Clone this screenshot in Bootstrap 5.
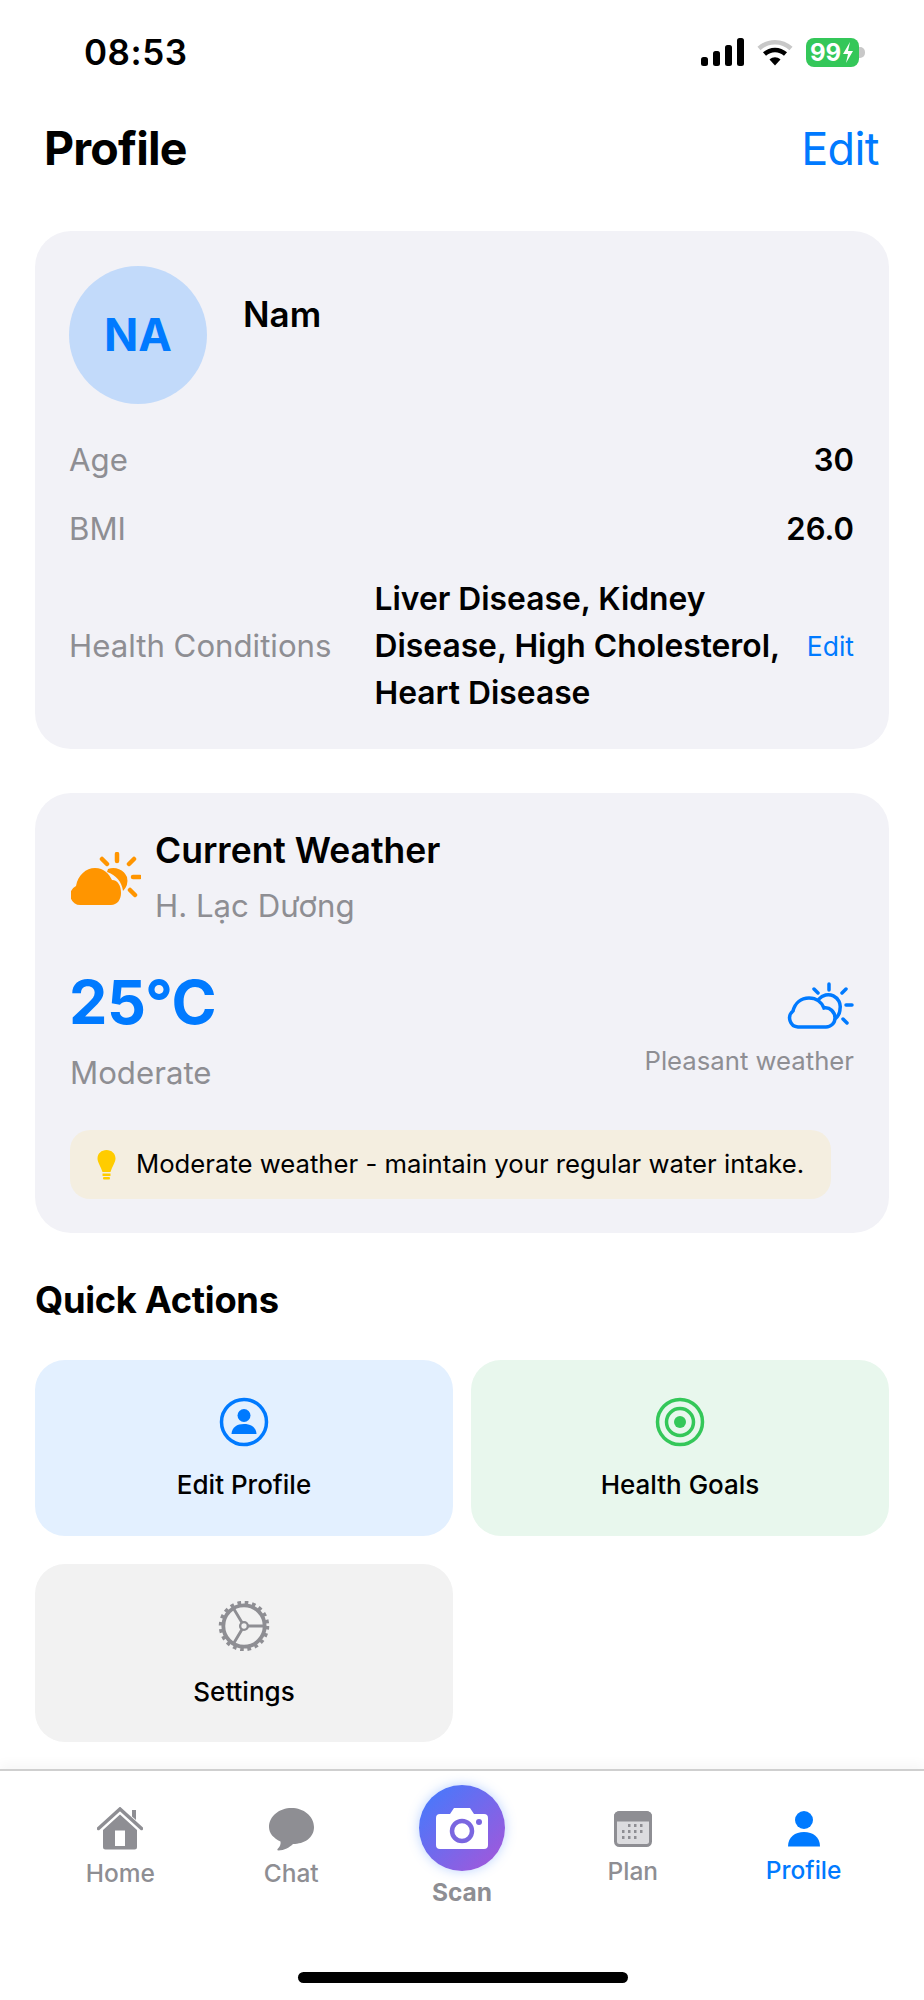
<!DOCTYPE html>
<html lang="en">
<head>
    <meta charset="UTF-8">
    <meta name="viewport" content="width=device-width, initial-scale=1.0">
    <title>Profile</title>
    <link href="https://cdn.jsdelivr.net/npm/bootstrap@5.3.0/dist/css/bootstrap.min.css" rel="stylesheet">
    <style>
        body { font-family: Inter, "Liberation Sans", sans-serif; background: #fff; color: #000; width: 924px; height: 2000px; overflow: hidden; }
        .status-strip { height: 104px; padding: 0 59px 0 84px; }
        .status-icons { gap: 13px; }
        .clock { font-size: 35px; font-weight: 600; line-height: 1; letter-spacing: .5px; }
        .batt { width: 53px; height: 29px; background: #34c759; border-radius: 8px; color: #fff; font-size: 24px; font-weight: 700; line-height: 29px; padding-left: 4px; }
        .batt-nub { width: 6px; height: 11px; background: #c8c8c8; border-radius: 0 5px 5px 0; }
        .page-head { height: 88px; padding: 0 45px 0 44px; }
        .page-title { font-size: 46.5px; font-weight: 700; letter-spacing: -.8px; line-height: 1; margin: 0; }
        .page-edit { font-size: 45px; color: #007aff; line-height: 1; text-decoration: none; letter-spacing: -.6px; }
        .panel { margin: 39px 35px 0; background: #f2f2f7; border-radius: 36px; }
        .panel-user { height: 518px; padding: 35px 35px 0 34px; }
        .avatar { width: 138px; height: 138px; background: #c2dafa; color: #007aff; font-size: 45px; font-weight: 700; }
        .user-name { font-size: 35px; font-weight: 600; margin: 28px 0 0 36px; line-height: 40px; }
        .info-row { margin-top: 27px; height: 42px; font-size: 31.2px; line-height: 42px; }
        .info-row.first-row { margin-top: 35px; }
        .info-row.tall-row { height: 141px; margin-top: 25px; }
        .info-label { color: #8e8e93; }
        .info-val { font-weight: 600; font-size: 31px; }
        .cond-text { font-size: 31.8px; font-weight: 600; line-height: 47px; width: 424px; margin-left: 43px; }
        .cond-edit { font-size: 26.5px; color: #007aff; text-decoration: none; }
        .panel-weather { height: 440px; margin-top: 44px; padding: 36px 35px 0; }
        .wx-icon { width: 70px; margin: 23px 14px 0 1px; flex: none; }
        .wx-title { font-size: 35.5px; font-weight: 600; line-height: 44px; }
        .wx-place { font-size: 31.2px; line-height: 44px; color: #8e8e93; margin-top: 11px; }
        .wx-temp { font-size: 61px; font-weight: 700; color: #007aff; line-height: 74px; margin-top: 37px; margin-left: -1px; letter-spacing: -.5px; }
        .wx-state { font-size: 31.2px; line-height: 40px; color: #8e8e93; margin-top: 14px; }
        .wx-side { margin-top: 54px; }
        .wx-note { font-size: 25.7px; color: #8e8e93; line-height: 34px; margin-top: 14px; }
        .tip-box { width: fit-content; height: 69px; margin-top: 37px; padding: 0 27px; background: #f4eee0; border-radius: 20px; font-size: 25.7px; }
        .tip-box svg { margin-right: 20px; }
        .section-title { font-size: 36.3px; font-weight: 700; line-height: 44px; margin: 45px 35px 10px; letter-spacing: -.3px; }
        .action-grid { --bs-gutter-x: 18px; --bs-gutter-y: 28px; margin: 0 26px; }
        .action-tile { height: 176px; border-radius: 30px; padding-top: 37px; font-size: 26px; font-weight: 500; }
        .action-tile svg { display: block; height: 50px; margin-bottom: 18px; }
        .tile-blue { background: #e3f0ff; }
        .tile-green { background: #e8f7ed; }
        .tile-grey { background: #f2f2f2; height: 178px; padding-top: 37px; }
        .tile-grey svg { margin-bottom: 21px; }
        .tab-bar { margin-top: 27px; height: 230px; border-top: 2px solid #cfcfcf; box-shadow: 0 -6px 10px rgba(0,0,0,.03); padding: 0 35px; background: #fff; position: relative; }
        .tab-item { width: 171px; color: #8e8e93; font-size: 24.5px; font-weight: 500; line-height: 30px; }
        .tab-icon { height: 44px; margin-top: 36px; margin-bottom: 7px; }
        .tab-plan .tab-icon { margin-bottom: 5px; }
        .tab-active { color: #007aff; }
        .tab-active .tab-icon { margin-bottom: 4px; }
        .scan-btn { width: 86px; height: 86px; margin-top: 14px; margin-bottom: 6px; background: linear-gradient(135deg, #3f7cff, #a855d8); box-shadow: 0 0 12px rgba(60,130,255,.35); }
        .scan-label { font-weight: 700; }
        .home-bar { position: absolute; left: 298px; top: 201px; width: 330px; height: 11px; background: #000; border-radius: 6px; }
    </style>
</head>
<body>
    <div class="status-strip d-flex align-items-center justify-content-between">
        <div class="clock">08:53</div>
        <div class="status-icons d-flex align-items-center">
            <svg width="43" height="28" viewBox="0 0 43 28"><rect x="0" y="19" width="7" height="9" rx="2.5"/><rect x="12" y="13" width="7" height="15" rx="2.5"/><rect x="24" y="7" width="7" height="21" rx="2.5"/><rect x="36" y="0" width="7" height="28" rx="2.5"/></svg>
            <svg width="36" height="27" viewBox="0 0 36 27" fill="none"><path d="M2 9.5C11 1 25 1 34 9.5" stroke="#c8c8c8" stroke-width="4.5"/><path d="M7.5 15C13.5 9.5 22.5 9.5 28.5 15" stroke="#000" stroke-width="4.5"/><path d="M12.5 20.5L18 26.5L23.5 20.5C20 17.5 16 17.5 12.5 20.5Z" fill="#000"/></svg>
            <div class="d-flex align-items-center">
                <div class="batt d-flex"><span>99</span><svg width="14" height="29" viewBox="0 0 14 29"><path d="M9 4L2 16H7L5 25L12 13H7Z" fill="#fff"/></svg></div>
                <div class="batt-nub"></div>
            </div>
        </div>
    </div>

    <div class="page-head d-flex align-items-center justify-content-between">
        <h1 class="page-title">Profile</h1>
        <a class="page-edit" href="#">Edit</a>
    </div>

    <div class="panel panel-user">
        <div class="d-flex">
            <div class="avatar rounded-circle d-flex align-items-center justify-content-center">NA</div>
            <div class="user-name">Nam</div>
        </div>
        <div class="info-row first-row d-flex justify-content-between">
            <span class="info-label">Age</span><span class="info-val">30</span>
        </div>
        <div class="info-row d-flex justify-content-between">
            <span class="info-label">BMI</span><span class="info-val">26.0</span>
        </div>
        <div class="info-row tall-row d-flex align-items-center">
            <span class="info-label">Health Conditions</span>
            <div class="cond-text">Liver Disease, Kidney Disease, High Cholesterol, Heart Disease</div>
            <a class="cond-edit ms-auto" href="#">Edit</a>
        </div>
    </div>

    <div class="panel panel-weather">
        <div class="d-flex">
            <svg class="wx-icon" viewBox="0 0 70 54" height="54"><path d="M46 2V9M31 7L36 12M63 7L58 12M62 25H69M59 38L64 43" stroke="#ff9500" stroke-width="4.5" stroke-linecap="round" fill="none"/><path d="M37 17A15 15 0 0 1 56 25A15 15 0 0 1 52 39C51 30 45 23 36 20Z" fill="#ff9500"/><path d="M10 53A10 10 0 0 1 5 34C7 23 15 16 24 16C33 16 38 22 41 28C47 28 50 34 50 41C50 48 46 53 40 53Z" fill="#ff9500"/></svg>
            <div>
                <div class="wx-title">Current Weather</div>
                <div class="wx-place">H. Lạc Dương</div>
            </div>
        </div>
        <div class="d-flex justify-content-between">
            <div>
                <div class="wx-temp">25°C</div>
                <div class="wx-state">Moderate</div>
            </div>
            <div class="wx-side d-flex flex-column align-items-end">
                <svg width="68" height="48" viewBox="0 0 68 48"><g stroke="#007aff" stroke-width="3.5" stroke-linecap="round" fill="none"><path d="M43 2V8M28 7L32 11M60 7L56 11M60 23H66M57 37L61 41"/><path d="M33 17A12 12 0 0 1 54 27C54 31 52 34 50 36"/><path d="M12 45A9 9 0 0 1 7 29C9 21 15 16 23 16C31 16 36 21 38 26C44 25 49 30 49 36C49 41 45 45 40 45Z"/></g></svg>
                <div class="wx-note">Pleasant weather</div>
            </div>
        </div>
        <div class="tip-box d-flex align-items-center">
            <svg width="19" height="30" viewBox="0 0 19 30"><path d="M9.5 0C14.5 0 18.5 3.5 18.5 8.5C18.5 12 15 17 13.5 22H5.5C4 17 .5 12 .5 8.500C.5 3.5 4.5 0 9.5 0Z" fill="#ffcc00"/><rect x="5.5" y="23.5" width="8" height="2.5" fill="#ffcc00"/><rect x="6" y="27" width="7" height="2.5" rx="1" fill="#ffcc00"/></svg>
            <span>Moderate weather - maintain your regular water intake.</span>
        </div>
    </div>

    <div class="section-title">Quick Actions</div>
    <div class="row action-grid">
        <div class="col-6">
            <div class="action-tile tile-blue d-flex flex-column align-items-center">
                <svg width="50" height="50" viewBox="0 0 50 50"><circle cx="25" cy="25" r="22.5" fill="none" stroke="#007aff" stroke-width="3.5"/><circle cx="25" cy="18.5" r="6.5" fill="#007aff"/><path d="M12.5 37C13 30 18 27 25 27C32 27 37 30 37.5 37Z" fill="#007aff"/></svg>
                <span>Edit Profile</span>
            </div>
        </div>
        <div class="col-6">
            <div class="action-tile tile-green d-flex flex-column align-items-center">
                <svg width="50" height="50" viewBox="0 0 50 50" fill="none"><circle cx="25" cy="25" r="22.5" stroke="#34c759" stroke-width="3.5"/><circle cx="25" cy="25" r="13.5" stroke="#34c759" stroke-width="3.5"/><circle cx="25" cy="25" r="6" fill="#34c759"/></svg>
                <span>Health Goals</span>
            </div>
        </div>
        <div class="col-6">
            <div class="action-tile tile-grey d-flex flex-column align-items-center">
                <svg width="52" height="50" viewBox="0 0 52 52" fill="none" stroke="#8e8e93"><circle cx="26" cy="26" r="21.5" stroke-width="4"/><circle cx="26" cy="26" r="24.5" stroke-width="3.5" stroke-dasharray="3.8 3.9"/><circle cx="26" cy="26" r="4" stroke-width="2.5"/><path d="M30 26H47M24 22.5L15 7.5M24 29.5L15 44.5" stroke-width="3"/></svg>
                <span>Settings</span>
            </div>
        </div>
    </div>

    <div class="tab-bar d-flex align-items-start">
        <div class="tab-item d-flex flex-column align-items-center">
            <svg class="tab-icon" width="46" height="44" viewBox="0 0 46 44"><path d="M1.5 21.5L23 2L44.5 21.5" fill="none" stroke="#8e8e93" stroke-width="3.5" stroke-linecap="round"/><path d="M35 3H39V13L35 9.5Z" fill="#8e8e93"/><path fill-rule="evenodd" d="M23 7.5L40 23V40A2.5 2.5 0 0 1 37.5 42.5H8.5A2.5 2.5 0 0 1 6 40V23ZM18 23.5H28V39H18Z" fill="#8e8e93"/></svg>
            <span>Home</span>
        </div>
        <div class="tab-item d-flex flex-column align-items-center">
            <svg class="tab-icon" width="45" height="44" viewBox="0 0 45 44"><path d="M22.5 1C34.5 1 45 9 45 20C45 31 35 37 24 37C21 40 15 43.5 9.5 43.5C8 43.5 8 42.5 9 41.5C11 39.5 12 37 11.5 34.5C4.5 31 0 26.5 0 20C0 9 10.5 1 22.5 1Z" fill="#8e8e93"/></svg>
            <span>Chat</span>
        </div>
        <div class="tab-item d-flex flex-column align-items-center">
            <div class="scan-btn rounded-circle d-flex align-items-center justify-content-center">
                <svg width="52" height="42" viewBox="0 0 52 42"><path d="M4 7H14L18 1H34L38 7H48A4 4 0 0 1 52 11V38A4 4 0 0 1 48 42H4A4 4 0 0 1 0 38V11A4 4 0 0 1 4 7Z" fill="#fff"/><circle cx="26" cy="24" r="10" fill="none" stroke="#7a66e0" stroke-width="4.5"/><circle cx="43" cy="15" r="3" fill="#7a66e0"/></svg>
            </div>
            <span class="scan-label">Scan</span>
        </div>
        <div class="tab-item tab-plan d-flex flex-column align-items-center">
            <svg class="tab-icon" width="38" height="44" viewBox="0 0 38 44"><rect x="1.5" y="5.5" width="35" height="33" rx="4" fill="#dcdcdf" stroke="#8e8e93" stroke-width="3"/><path d="M1.5 9.5A4 4 0 0 1 5.5 5.5H32.5A4 4 0 0 1 36.5 9.5V13H1.5Z" fill="#8e8e93" stroke="#8e8e93" stroke-width="3"/><g fill="#8e8e93"><rect x="14" y="17" width="2.5" height="3"/><rect x="20" y="17" width="2.5" height="3"/><rect x="26" y="17" width="2.5" height="3"/><rect x="8" y="23" width="2.5" height="3"/><rect x="14" y="23" width="2.5" height="3"/><rect x="20" y="23" width="2.5" height="3"/><rect x="26" y="23" width="2.5" height="3"/><rect x="8" y="29" width="2.5" height="3"/><rect x="14" y="29" width="2.5" height="3"/><rect x="20" y="29" width="2.5" height="3"/></g></svg>
            <span>Plan</span>
        </div>
        <div class="tab-item tab-active d-flex flex-column align-items-center">
            <svg class="tab-icon" width="34" height="44" viewBox="0 0 34 44"><circle cx="17" cy="13" r="9" fill="#007aff"/><path d="M1 39.5C1 30 8 25 17 25C26 25 33 30 33 39.5Z" fill="#007aff"/></svg>
            <span>Profile</span>
        </div>
        <div class="home-bar"></div>
    </div>
</body>
</html>
